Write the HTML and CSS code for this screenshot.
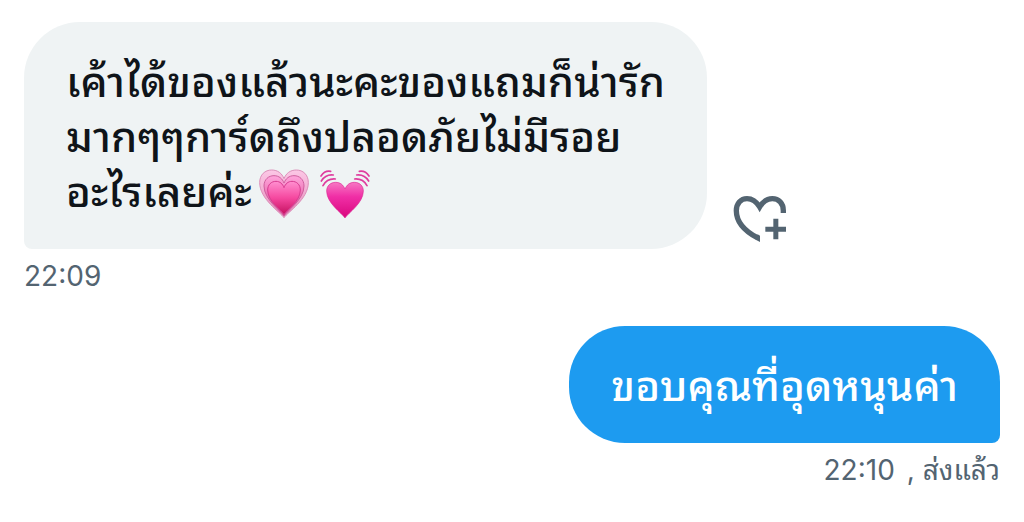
FILE: index.html
```
<!DOCTYPE html>
<html lang="th">
<head>
    <meta charset="UTF-8">
    <meta name="viewport" content="width=device-width, initial-scale=1.0">
    <title>Messages</title>
    <link rel="stylesheet" href="styles.css">
</head>
<body>
    <main class="chat">
        <div class="message received">
            <div class="bubble-row">
                <p class="bubble">
                    เค้าได้ของแล้วนะคะของแถมก็น่ารัก<br>
                    มากๆๆการ์ดถึงปลอดภัยไม่มีรอย<br>
                    อะไรเลยค่ะ<svg class="emoji" viewBox="0 0 150 150" role="img" aria-label="growing heart">
                        <defs>
                            <linearGradient id="grow" x1="0" y1="0" x2="0" y2="1">
                                <stop offset="0" stop-color="#ff8fd0"/>
                                <stop offset="0.5" stop-color="#f5489f"/>
                                <stop offset="1" stop-color="#c4105f"/>
                            </linearGradient>
                            <linearGradient id="mid" x1="0" y1="0" x2="0" y2="1">
                                <stop offset="0" stop-color="#ffa6dc"/>
                                <stop offset="1" stop-color="#d63f89"/>
                            </linearGradient>
                            <linearGradient id="outer" x1="0" y1="0" x2="0" y2="1">
                                <stop offset="0" stop-color="#fcc8e6"/>
                                <stop offset="1" stop-color="#e589b8"/>
                            </linearGradient>
                        </defs>
                        <path fill="url(#outer)" stroke="#dc8fb9" stroke-width="3" d="M75 146C65 130 2 91 2 41C2 17 18 3 38 3C56 3 69 13 75 29C81 13 94 3 112 3C132 3 148 17 148 41C148 91 85 130 75 146Z"/>
                        <path fill="url(#mid)" stroke="#cf609f" stroke-width="3" d="M75 141C66 125 15 92 15 51C15 31 29 20 45 20C60 20 70 29 75 42C80 29 90 20 105 20C121 20 135 31 135 51C135 92 84 125 75 141Z"/>
                        <path fill="url(#grow)" stroke="#d83b91" stroke-width="3" d="M75 137C67 123 26 97 26 63C26 47 37 37 51 37C63 37 71 45 75 56C79 45 87 37 99 37C113 37 124 47 124 63C124 97 83 123 75 137Z"/>
                    </svg><svg class="emoji" viewBox="0 0 150 150" role="img" aria-label="beating heart">
                        <defs>
                            <linearGradient id="beat" x1="0" y1="0" x2="0" y2="1">
                                <stop offset="0" stop-color="#f777c3"/>
                                <stop offset="0.4" stop-color="#f02fa6"/>
                                <stop offset="1" stop-color="#d9067d"/>
                            </linearGradient>
                        </defs>
                        <path fill="url(#beat)" stroke="#dd2b94" stroke-width="2" d="M75 147C66 132 20 103 20 66C20 50 32 40 47 40C61 40 70 48 75 60C80 48 89 40 103 40C118 40 130 50 130 66C130 103 84 132 75 147Z"/>
                        <g fill="none" stroke="#df3c9e" stroke-width="5" stroke-linecap="round">
                            <path d="M3 21Q14 4 32 7M4 36Q17 15 40 18M9 50Q21 28 46 30"/>
                            <path d="M147 21Q136 4 118 7M146 36Q133 15 110 18M141 50Q129 28 104 30"/>
                        </g>
                    </svg>
                </p>
                <button type="button" class="react" aria-label="Add reaction">
                    <svg viewBox="36 30 162 144" aria-hidden="true">
                        <path fill="none" stroke="#536471" stroke-width="16" d="M187 84V77C187 55 173 41 154 41C138 41 125 51 116 66C107 51 94 41 78 41C59 41 46 56 46 77C46 108 68 136 109 158"/>
                        <path fill="#536471" d="M117 152V171L104 164L110 148Z"/>
                        <path fill="#536471" d="M157 101h15v24h23v15h-23v23h-15v-23h-24v-15h24z"/>
                    </svg>
                </button>
            </div>
            <p class="meta"><time>22:09</time></p>
        </div>

        <div class="message sent">
            <p class="bubble">ขอบคุณที่อุดหนุนค่า</p>
            <p class="meta"><time>22:10</time><span>, ส่งแล้ว</span></p>
        </div>
    </main>
</body>
</html>
```
FILE: styles.css
```
body {
    margin: 0;
    background-color: #ffffff;
    color: #0f1419;
    font-family: Inter, "Noto Sans Thai Looped", "Noto Looped Thai", Loma, Garuda, Waree, "Noto Sans Thai", "Noto Sans", sans-serif;
}

.chat {
    display: flex;
    flex-direction: column;
    gap: 32px;
    padding: 22px 24px;
}

.message {
    display: flex;
    flex-direction: column;
    align-items: flex-start;
}

.sent {
    align-items: flex-end;
}

.bubble-row {
    display: flex;
    align-items: flex-end;
    gap: 26px;
    width: 100%;
}

.bubble {
    box-sizing: border-box;
    margin: 0;
    padding: 32px 42px 30px;
    font-size: 42px;
    font-weight: 500;
    line-height: 55px;
    white-space: nowrap;
}

.received .bubble {
    background-color: #eff3f4;
    border-radius: 56px 56px 56px 8px;
}

.sent .bubble {
    background-color: #1d9bf0;
    color: #ffffff;
    border-radius: 56px 56px 8px 56px;
}

.emoji {
    width: 50px;
    height: 50px;
    margin: 0 4px 0 7px;
    vertical-align: -12px;
}

.react {
    margin: 0 0 6px;
    padding: 0;
    border: none;
    background: none;
    cursor: pointer;
}

.react svg {
    display: block;
    width: 54px;
    height: 48px;
}

.meta {
    display: flex;
    gap: 12px;
    margin: 9px 0 0;
    color: #536471;
    font-size: 28px;
    line-height: 36px;
}
```
